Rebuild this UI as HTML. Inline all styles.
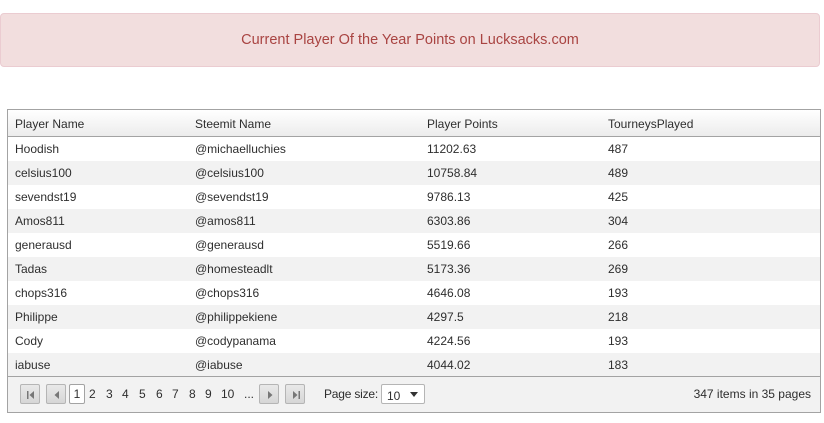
<!DOCTYPE html>
<html><head><style>
body{margin:0;width:824px;height:423px;background:#fff;font-family:"Liberation Sans",sans-serif;position:relative;overflow:hidden}
.alert{position:absolute;left:0;top:13px;width:818px;height:52px;background:#f2dede;border:1px solid #ebccd1;border-radius:4px;color:#a94442;font-size:14.5px;text-align:center;line-height:52px}
.grid{position:absolute;left:7px;top:109px;width:812px;height:302px;border:1px solid #a3a3a3;font-size:12px;color:#2e2e2e}
.hdr{height:26px;border-bottom:1px solid #a3a3a3;background:linear-gradient(#fff,#ececec);position:relative}
.row{height:24px;position:relative}
.c{position:absolute;top:0;line-height:24px}
.hdr .c{line-height:28px}
.c1{left:7px}.c2{left:187px}.c3{left:419px}.c4{left:600px}
.pager{position:absolute;left:0;right:0;bottom:0;height:35px;border-top:1px solid #a3a3a3;background:#f2f2f2}
.btn{position:absolute;top:7px;width:20px;height:20px;border:1px solid #b5b5b5;border-radius:2px;background:linear-gradient(#e9e9e9,#d6d6d6);box-sizing:border-box}
.btn svg{position:absolute;left:5px;top:5px}
.pn{position:absolute;top:8px;line-height:18px}
.sel{position:absolute;left:373px;top:7px;width:44px;height:20px;border:1px solid #b5b5b5;border-radius:2px;background:#fff;box-sizing:border-box;line-height:22px;padding-left:5px}
</style></head><body>
<div class="alert">Current Player Of the Year Points on Lucksacks.com</div>
<div class="grid">
<div class="hdr"><span class="c c1">Player Name</span><span class="c c2">Steemit Name</span><span class="c c3">Player Points</span><span class="c c4">TourneysPlayed</span></div>
<div>
<div class="row" style="background:#fff"><span class="c c1">Hoodish</span><span class="c c2">@michaelluchies</span><span class="c c3">11202.63</span><span class="c c4">487</span></div>
<div class="row" style="background:#f2f2f2"><span class="c c1">celsius100</span><span class="c c2">@celsius100</span><span class="c c3">10758.84</span><span class="c c4">489</span></div>
<div class="row" style="background:#fff"><span class="c c1">sevendst19</span><span class="c c2">@sevendst19</span><span class="c c3">9786.13</span><span class="c c4">425</span></div>
<div class="row" style="background:#f2f2f2"><span class="c c1">Amos811</span><span class="c c2">@amos811</span><span class="c c3">6303.86</span><span class="c c4">304</span></div>
<div class="row" style="background:#fff"><span class="c c1">generausd</span><span class="c c2">@generausd</span><span class="c c3">5519.66</span><span class="c c4">266</span></div>
<div class="row" style="background:#f2f2f2"><span class="c c1">Tadas</span><span class="c c2">@homesteadlt</span><span class="c c3">5173.36</span><span class="c c4">269</span></div>
<div class="row" style="background:#fff"><span class="c c1">chops316</span><span class="c c2">@chops316</span><span class="c c3">4646.08</span><span class="c c4">193</span></div>
<div class="row" style="background:#f2f2f2"><span class="c c1">Philippe</span><span class="c c2">@philippekiene</span><span class="c c3">4297.5</span><span class="c c4">218</span></div>
<div class="row" style="background:#fff"><span class="c c1">Cody</span><span class="c c2">@codypanama</span><span class="c c3">4224.56</span><span class="c c4">193</span></div>
<div class="row" style="background:#f2f2f2"><span class="c c1">iabuse</span><span class="c c2">@iabuse</span><span class="c c3">4044.02</span><span class="c c4">183</span></div>
</div>
<div class="pager">
<div class="btn" style="left:12px"><svg width="10" height="10"><rect x="1" y="1" width="1.5" height="8" fill="#777"/><path d="M8 1L3.5 5L8 9Z" fill="#777"/></svg></div>
<div class="btn" style="left:38px"><svg width="10" height="10"><path d="M7 1L2.5 5L7 9Z" fill="#777"/></svg></div>
<div class="pn" style="left:61px;width:14px;height:18px;border:1px solid #a3a3a3;background:#fff;text-align:center;border-radius:2px;top:7px">1</div>
<span class="pn" style="left:81px">2</span><span class="pn" style="left:98px">3</span><span class="pn" style="left:114px">4</span><span class="pn" style="left:131px">5</span><span class="pn" style="left:148px">6</span><span class="pn" style="left:164px">7</span><span class="pn" style="left:181px">8</span><span class="pn" style="left:197px">9</span><span class="pn" style="left:213px">10</span><span class="pn" style="left:236px">...</span>
<div class="btn" style="left:251px"><svg width="10" height="10"><path d="M3 1L7.5 5L3 9Z" fill="#777"/></svg></div>
<div class="btn" style="left:277px"><svg width="10" height="10"><path d="M2 1L6.5 5L2 9Z" fill="#777"/><rect x="7.5" y="1" width="1.5" height="8" fill="#777"/></svg></div>
<span class="pn" style="left:316px;letter-spacing:-0.2px">Page size:</span>
<div class="sel">10<svg style="position:absolute;right:6px;top:7px" width="8" height="5"><path d="M0 0H8L4 5Z" fill="#333"/></svg></div>
<span class="pn" style="right:9px">347 items in 35 pages</span>
</div>
</div>
</body></html>
